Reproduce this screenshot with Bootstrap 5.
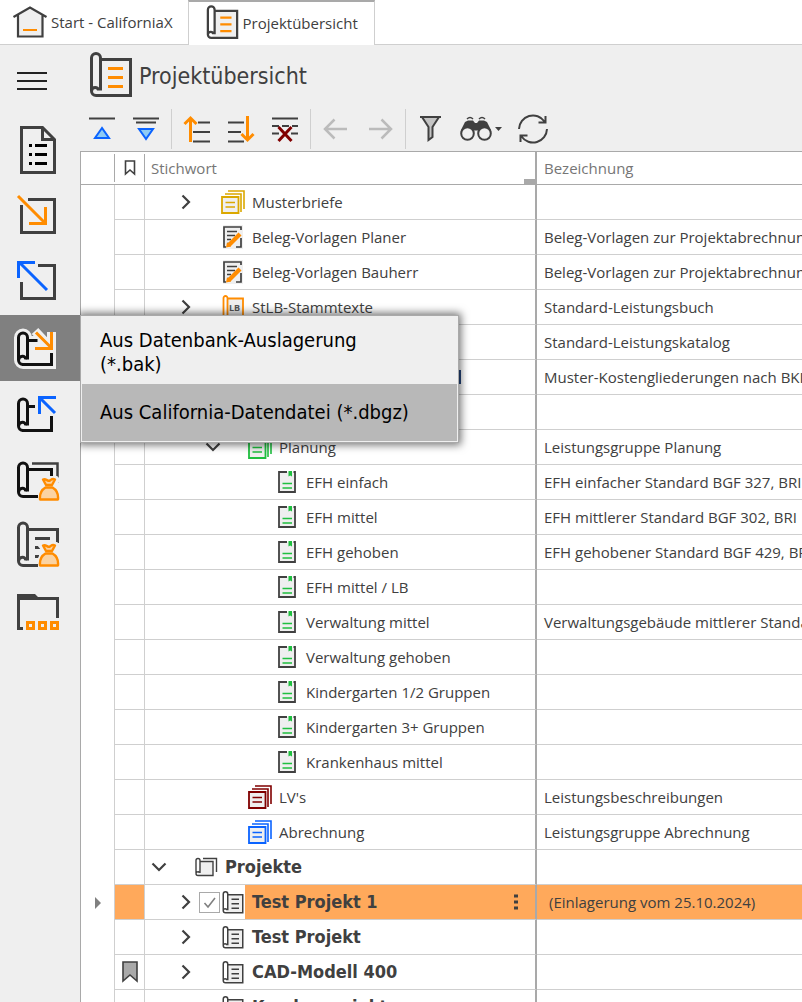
<!DOCTYPE html>
<html lang="de">
<head>
<meta charset="utf-8">
<meta name="viewport" content="width=device-width, initial-scale=1">
<title>Projektübersicht</title>
<link href="https://cdn.jsdelivr.net/npm/bootstrap@5.3.0/dist/css/bootstrap.min.css" rel="stylesheet">
<style>
:root { --ink: #404040; --line: #cfcfcf; --edge: #a9a9a9; --panel: #efefef; --orange: #ff8c00; --blue: #0a63ff; --pick: #ffa95b; --roll: #fff; --wide: "DejaVu Sans Condensed", "Noto Sans", sans-serif; }
body { font-family: "Open Sans", "Noto Sans", sans-serif; font-size: 15px; line-height: 24px; color: var(--ink); background: #fff; }
svg { display: block; flex: none; fill: none; }
button { color: inherit; font: inherit; background: none; border: 0; padding: 0; }
.tabbar { height: 45px; }
.tabbar .filler { border-bottom: 1px solid var(--line); }
.doc-tab { border: 0 solid var(--line); border-bottom-width: 1px; color: var(--ink); }
.doc-tab.start { padding: 0 15px 0 13px; }
.doc-tab.current { border-width: 0 1px; border-top: 2px solid var(--edge); padding: 0 16px 2px 17px; }
.side { width: 80px; background: var(--panel); z-index: 2; }
.side .menu-btn { display: block; height: 72px; padding-left: 17px; width: 80px; }
.side .tool { display: block; width: 80px; height: 66px; }
.side .tool.active { background: #808080; }
.flyout { left: 80px; top: 0; width: 379px; background: var(--panel); border: 1px solid var(--edge); padding: 1px; box-shadow: 0 0 8px 2px rgba(0,0,0,.55); color: #000; font-family: var(--wide); font-size: 20px; clip-path: inset(-12px -12px -12px 0); }
.flyout button { display: block; width: 100%; text-align: left; }
.flyout .entry { padding: 11px 18px 8px; }
.flyout .entry.hover { padding: 16px 18px 17px; background: #b8b8b8; }
.workspace { background: var(--panel); }
.heading { height: 62px; padding: 7px 0 0 9px; --roll: var(--panel); }
.heading h1 { font-family: var(--wide); font-size: 23px; line-height: 48px; margin: 0; padding-left: 6px; }
.toolbar { height: 44px; }
.toolbar button { width: 44px; height: 44px; display: flex; align-items: center; justify-content: center; }
.toolbar .find { width: 58px; }
.toolbar .rule { width: 1px; height: 40px; margin: 0 3px; background: var(--line); }
.grid-area { border: 1px solid var(--edge); border-width: 1px 0 0 1px; background: #fff; }
.tree { table-layout: fixed; width: 100%; border-collapse: separate; border-spacing: 0; }
.tree th, .tree td { padding: 0; overflow: hidden; white-space: nowrap; }
.tree th { height: 33px; font-weight: 400; color: #767676; border-bottom: 1px solid var(--edge); position: relative; }
.tree th .stub { height: 28px; border-right: 1px solid var(--edge); }
.tree td { height: 35px; border-bottom: 1px solid var(--line); }
.tree td:nth-child(1), .tree td:nth-child(2) { border-right: 1px solid var(--line); }
.tree td:nth-child(1) { border-bottom: 0; }
.tree th:nth-child(3), .tree td:nth-child(3) { border-right: 2px solid var(--edge); }
.tree th:nth-child(4), .tree td:nth-child(4) { padding-left: 7px; }
.tree th:nth-child(3) { padding-left: 6px; }
.sortmark { right: 0; bottom: 0; width: 11px; height: 5px; background: var(--edge); }
.node { height: 34px; }
.node .twist { width: 27px; height: 34px; display: flex; align-items: center; justify-content: center; flex: none; }
.node .slot { width: 22px; flex: none; }
.node .pic { width: 24px; flex: none; display: flex; justify-content: center; }
.node .name { padding-left: 7px; line-height: 34px; flex: 1; }
.lv1 { padding-left: 27px; } .lv2 { padding-left: 54px; } .lv3 { padding-left: 81px; }
.strong .name { font-family: var(--wide); font-weight: 700; font-size: 18px; }
.picked td:nth-child(2), .picked td:nth-child(4), .picked .name { background: var(--pick); }
.tree .picked td:nth-child(4) { padding-left: 12px; }
.slot input { appearance: none; display: block; width: 21px; height: 21px; margin: 0; border: 1px solid var(--edge); background: #fff url("data:image/svg+xml,%3Csvg xmlns='http://www.w3.org/2000/svg' viewBox='0 0 19 19'%3E%3Cpath d='M4.500 10l3.500 4 7-9' fill='none' stroke='%23808080' stroke-width='1.600'/%3E%3C/svg%3E"); }
.more { width: 38px; }
</style>
</head>
<body class="vh-100 overflow-hidden d-flex flex-column">

<svg width="0" height="0" class="position-absolute" aria-hidden="true">
  <symbol id="scroll" viewBox="0 0 44 46">
    <path d="M11.500 7.500H41.500V43.500H7L11.500 38Z" fill="#efefef"/>
    <path d="M2.500 39V6a4.500 4.500 0 0 1 9 0V38H8.500L2.500 39Z" style="fill:var(--roll)"/>
    <g stroke="#404040" stroke-width="3"><path d="M2.500 39V6a4.500 4.500 0 0 1 9 0V38.500M11.500 7.500H41.500V43.500H7A4.500 4.500 0 0 1 2.500 39C3 34 9.500 34.500 9.500 38.500"/></g>
    <path d="M19 16.500H34M19 25.500H34M19 34.500H34" stroke="currentColor" stroke-width="3"/>
  </symbol>
  <symbol id="scrollstack" viewBox="0 0 24 24">
    <path d="M6 7H19V20H4Z" fill="#efefef"/>
    <path d="M2 18V5.500a2 2 0 0 1 4 0V18M6 6.500H19V20.500H4A2 2 0 0 1 2 18.500 2 2 0 0 1 5.500 17.500M9 3.500H22.500V17" stroke="#404040" stroke-width="1.400"/>
  </symbol>
  <symbol id="stack" viewBox="0 0 24 24">
    <path d="M7 1H23V19M4 4H20V22" stroke="currentColor" stroke-width="1.600"/>
    <path d="M1 7H17.500V23H1Z" fill="#efefef" stroke="currentColor" stroke-width="1.800"/>
    <path d="M4.500 12.500H14M4.500 17H14" stroke="currentColor" stroke-width="1.600"/>
  </symbol>
  <symbol id="note" viewBox="0 0 22 24">
    <path d="M1 0H21V24H1Z" fill="#efefef"/>
    <path d="M14 22H19V13M19 5V2H2V22H4M5 6.500H15M5 10.500H13M5 14.500H9M5 18.500H7" stroke="#404040" stroke-width="1.700"/>
    <path d="M6.500 20.500L18 9" stroke="#ff8c00" stroke-width="4.200"/><path d="M4 22.500L5 17.500 9 21.500Z" fill="#ff8c00"/>
  </symbol>
  <symbol id="page" viewBox="0 0 18 22">
    <path d="M1 1H17V21H1Z" fill="#efefef"/>
    <path d="M9 1H1V21H17V1H15.500" stroke="#404040" stroke-width="1.800"/>
    <path d="M4.500 12.500H14M4.500 17H14" stroke="#1fbf3f" stroke-width="1.700"/><path d="M10.500 0H14V5.500L12.200 4.500 10.500 5.500Z" fill="#1fbf3f"/>
  </symbol>
  <symbol id="right" viewBox="0 0 10 16"><path d="M1.500 1.500L8 8 1.500 14.500" stroke="#404040" stroke-width="2.200"/></symbol>
  <symbol id="down" viewBox="0 0 16 10"><path d="M1.500 1.500L8 8 14.500 1.500" stroke="#404040" stroke-width="2.200"/></symbol>
  <symbol id="roll" viewBox="0 0 80 66"><path d="M18.500 45V22.500a4.500 4.500 0 0 1 9 0V44.500M18.500 45A4.500 4.500 0 0 0 23 49.500M18.500 45C19 40 26 40 25.500 44.500" stroke="currentColor" stroke-width="3"/></symbol>
  <symbol id="sack" viewBox="0 0 22 26">
    <path d="M7 10.500C2 13 0 18 1 24H21C22 18 20 13 15 10.500L21 4 17 0H6L1 3Z" fill="#efefef" stroke="#efefef" stroke-width="3"/>
    <path d="M7.500 11.500C4 13.500 1.500 18 2 23.500H20C20.500 18 18 13.500 14.500 11.500Z" fill="#fbd3a2" stroke="#ff8c00" stroke-width="2.400" stroke-linejoin="round"/>
    <path d="M8 9L5 3.500C8 2 10 6 12 4.500S14.500 2 17 3.500L14 9Z" fill="#fbd3a2" stroke="#ff8c00" stroke-width="2.400" stroke-linejoin="round"/>
  </symbol>
</svg>

<nav class="tabbar d-flex flex-shrink-0">
  <button class="doc-tab start d-flex align-items-center">
    <svg width="34" height="34" viewBox="0 0 34 34"><path d="M4.500 31.500V10L17 2.500 29.500 10V31.500Z" fill="#efefef"/><path d="M0.500 12L17 2.500 33.500 12M5 10V31.500H29.500V10" stroke="#404040" stroke-width="2.200"/><path d="M10 25H24" stroke="#ff8c00" stroke-width="2"/></svg>
    <span class="ps-1">Start - CaliforniaX</span>
  </button>
  <button class="doc-tab current d-flex align-items-center">
    <svg width="33" height="35" style="color:var(--orange)"><use href="#scroll"/></svg>
    <span class="ps-1">Projektübersicht</span>
  </button>
  <div class="filler flex-grow-1"></div>
</nav>

<div class="d-flex flex-grow-1" style="min-height:0">
  <aside class="side flex-shrink-0">
    <button class="menu-btn" aria-label="Menü"><svg width="30" height="18"><path d="M0 1H30M0 9H30M0 17H30" stroke="#222" stroke-width="2"/></svg></button>
    <button class="tool" aria-label="Dokument"><svg width="80" height="66"><path d="M21.500 10.500H42.500L54.500 22.500V55.500H21.500ZM42.500 10.500V22.500H54.500" stroke="#404040" stroke-width="3"/><path d="M29 28.500H32M35 28.500H47M29 37.500H32M35 37.500H47M29 46.500H32M35 46.500H47" stroke="#000" stroke-width="3"/></svg></button>
    <button class="tool" aria-label="Einlesen"><svg width="80" height="66"><path d="M28 16.500H54.500V49.500H21.500V22" stroke="#404040" stroke-width="3"/><path d="M18 13L45 40M45.500 24V40.500H29" stroke="#ff8c00" stroke-width="3"/></svg></button>
    <button class="tool" aria-label="Ausgeben"><svg width="80" height="66"><path d="M38 16.500H54.500V49.500H21.500V33" stroke="#404040" stroke-width="3"/><path d="M47 41L19 13M35 13.500H18.500V29" stroke="#0a63ff" stroke-width="3"/></svg></button>
    <div class="position-relative">
      <button class="tool active" aria-label="Einlagern" aria-expanded="true"><svg width="80" height="66">
        <path d="M18.500 45V22.500a4.500 4.500 0 0 1 9 0V25.500H37M51.500 38V49.500H23A4.500 4.500 0 0 1 18.500 45M35 16L51 33M51.500 17V33.500H35" stroke="#efefef" stroke-width="9"/>
        <path d="M18 22H50V48H20Z" fill="#efefef"/>
        <use href="#roll" width="80" height="66" style="color:#111"/><path d="M27 25.500H37.500M51.500 38V49.500H22" stroke="#111" stroke-width="3"/>
        <path d="M36 17.500L51 32.500M51.500 17V33.500H35" stroke="#ff8c00" stroke-width="3"/></svg></button>
      <div class="flyout position-absolute" role="menu">
        <button class="entry" role="menuitem">Aus Datenbank-Auslagerung<br>(*.bak)</button>
        <button class="entry hover" role="menuitem">Aus California-Datendatei (*.dbgz)</button>
      </div>
    </div>
    <button class="tool" aria-label="Auslagern"><svg width="80" height="66"><use href="#roll" width="80" height="66" style="color:#111"/><path d="M27 25.500H35M51.500 35V49.500H22" stroke="#111" stroke-width="3"/><path d="M55 32L40 17M56 16.500H39.500V33" stroke="#0a63ff" stroke-width="3"/></svg></button>
    <button class="tool" aria-label="Projektablage"><svg width="80" height="66"><path d="M32 16.500H57.500V36" stroke="#404040" stroke-width="2.500"/><path d="M18.500 45V20.500a4.500 4.500 0 0 1 9 0V44.500M18.500 45A4.500 4.500 0 0 0 23 49.500H38M18.500 45C19 40 26 40 25.500 44.500M27 22.500H51.500V30" stroke="#111" stroke-width="3"/><use href="#sack" x="38" y="29" width="22" height="26"/></svg></button>
    <button class="tool" aria-label="Vorlagenablage"><svg width="80" height="66"><path d="M18.500 48V14.500a4.500 4.500 0 0 1 9 0V47.500M18.500 48A4.500 4.500 0 0 0 23 52.500H38M18.500 48C19 43 26 43 25.500 47.500M27 16.500H57.500V30M35 25.500H50M35 34.500H41M35 43.500H39" stroke="#404040" stroke-width="3"/><use href="#sack" x="38" y="29" width="22" height="26"/></svg></button>
    <button class="tool" aria-label="Ordner"><svg width="80" height="66"><path d="M17 15H35L38 18H59V21H17Z" fill="#404040"/><path d="M18.500 19V49.500H23M57.500 20V39" stroke="#404040" stroke-width="3"/><path d="M27.500 43.500H33.500V49.500H27.500ZM39.500 43.500H45.500V49.500H39.500ZM51.500 43.500H57.500V49.500H51.500Z" stroke="#ff8c00" stroke-width="3"/></svg></button>
  </aside>

  <main class="workspace flex-grow-1 overflow-hidden d-flex flex-column">
    <header class="heading d-flex flex-shrink-0">
      <svg width="44" height="46" style="color:var(--orange)"><use href="#scroll"/></svg>
      <h1 class="fw-normal">Projektübersicht</h1>
    </header>
    <div class="toolbar d-flex align-items-center flex-shrink-0" role="toolbar">
      <button aria-label="Zum Anfang"><svg width="32" height="32"><path d="M3 5.500H29" stroke="#404040" stroke-width="2"/><path d="M16 15L9 25H23Z" fill="#8ecbf5" stroke="#0a63ff" stroke-width="2"/></svg></button>
      <button aria-label="Einklappen"><svg width="32" height="32"><path d="M3 5.500H29M6 9.500H26" stroke="#404040" stroke-width="2"/><path d="M16 26L9 16H23Z" fill="#8ecbf5" stroke="#0a63ff" stroke-width="2"/></svg></button>
      <span class="rule"></span>
      <button aria-label="Nach oben"><svg width="32" height="32"><path d="M17 9.500H29M12 19H29M12 28.500H29" stroke="#404040" stroke-width="2"/><path d="M9.500 29V5M3.500 11L9.500 5 15.500 11" stroke="#ff8c00" stroke-width="3"/></svg></button>
      <button aria-label="Nach unten"><svg width="32" height="32"><path d="M3 9.500H19M3 19H16M3 28.500H19" stroke="#404040" stroke-width="2"/><path d="M22.500 3V27M16.500 21L22.500 27 28.500 21" stroke="#ff8c00" stroke-width="3"/></svg></button>
      <button aria-label="Löschen"><svg width="32" height="32"><path d="M3 5.500H29M3 13H10M13 13H20M23 13H29M3 20.500H10M22 20.500H29" stroke="#404040" stroke-width="2"/><path d="M9.500 14L22.500 28M22.500 14L9.500 28" stroke="#800000" stroke-width="3"/></svg></button>
      <span class="rule"></span>
      <button aria-label="Zurück"><svg width="32" height="32"><path d="M27 16H5M14.500 6.500L5 16 14.500 25.500" stroke="#bbb" stroke-width="2.500"/></svg></button>
      <button aria-label="Vor"><svg width="32" height="32"><path d="M5 16H27M17.500 6.500L27 16 17.500 25.500" stroke="#bbb" stroke-width="2.500"/></svg></button>
      <span class="rule"></span>
      <button aria-label="Filter"><svg width="32" height="32"><path d="M7 4H24L17.500 14V24L13.500 27V14Z" fill="#c4c4c4" stroke="#404040" stroke-width="2"/><path d="M5 4H26" stroke="#404040" stroke-width="2"/></svg></button>
      <button class="find" aria-label="Suchen"><svg width="44" height="32" viewBox="0 0 44 32"><path d="M1 17L5 9 8 7.500H13L15 10H17L19 7.500H24L27 9 31 17 26 22 19 17.500H13L6 22Z" fill="#404040"/><g fill="#efefef" stroke="#404040" stroke-width="2"><circle cx="7.500" cy="20.500" r="6.300"/><circle cx="24.500" cy="20.500" r="6.300"/></g><path d="M7 6Q10 3 13 6M19 6Q22 3 25 6" stroke="#404040" stroke-width="1.500"/><path d="M35 14H42L38.500 18Z" fill="#404040"/></svg></button>
      <button aria-label="Aktualisieren"><svg width="32" height="32"><path d="M2 16A14 14 0 0 1 27.500 8.500M30 16A14 14 0 0 1 4.500 23.500M28.500 3V9.500H21.500M3.500 29V22.500H10.500" stroke="#404040" stroke-width="2"/></svg></button>
    </div>
    <div class="grid-area flex-grow-1 overflow-hidden">
      <table class="tree">
        <colgroup><col style="width:34px"><col style="width:30px"><col style="width:392px"><col></colgroup>
        <thead><tr>
          <th><div class="stub"></div></th>
          <th><div class="stub d-flex align-items-center justify-content-center"><svg width="12" height="16"><path d="M1.500 1H10.500V14L6 10 1.500 14Z" stroke="#404040" stroke-width="1.600"/></svg></div></th>
          <th>Stichwort<span class="sortmark position-absolute"></span></th>
          <th>Bezeichnung</th>
        </tr></thead>
        <tbody>
        <tr><td></td><td></td><td><div class="node lv1 d-flex align-items-center"><button class="twist" aria-label="Aufklappen"><svg width="10" height="16"><use href="#right"/></svg></button><span class="slot"></span><span class="pic"><svg width="24" height="24" style="color:#dba800"><use href="#stack"/></svg></span><span class="name">Musterbriefe</span></div></td><td></td></tr>
        <tr><td></td><td></td><td><div class="node lv1 d-flex align-items-center"><span class="twist"></span><span class="slot"></span><span class="pic"><svg width="22" height="24"><use href="#note"/></svg></span><span class="name">Beleg-Vorlagen Planer</span></div></td><td>Beleg-Vorlagen zur Projektabrechnung</td></tr>
        <tr><td></td><td></td><td><div class="node lv1 d-flex align-items-center"><span class="twist"></span><span class="slot"></span><span class="pic"><svg width="22" height="24"><use href="#note"/></svg></span><span class="name">Beleg-Vorlagen Bauherr</span></div></td><td>Beleg-Vorlagen zur Projektabrechnung</td></tr>
        <tr><td></td><td></td><td><div class="node lv1 d-flex align-items-center"><button class="twist" aria-label="Aufklappen"><svg width="10" height="16"><use href="#right"/></svg></button><span class="slot"></span><span class="pic"><svg width="22" height="24"><path d="M5 3H21V22H5Z" fill="#efefef"/><path d="M1.500 22V3a2 2 0 0 1 4 0V22M5.500 3.500H21V22" stroke="#ff8c00" stroke-width="1.800"/><text x="7" y="16" font-size="9" font-weight="700" fill="#555">LB</text></svg></span><span class="name">StLB-Stammtexte</span></div></td><td>Standard-Leistungsbuch</td></tr>
        <tr><td></td><td></td><td></td><td>Standard-Leistungskatalog</td></tr>
        <tr><td></td><td></td><td><div class="d-flex justify-content-end"><svg width="76" height="14"><path d="M1 0V14" stroke="#26477f" stroke-width="2"/></svg></div></td><td>Muster-Kostengliederungen nach BKI</td></tr>
        <tr><td></td><td></td><td></td><td></td></tr>
        <tr><td></td><td></td><td><div class="node lv2 d-flex align-items-center"><button class="twist" aria-label="Zuklappen"><svg width="16" height="10"><use href="#down"/></svg></button><span class="slot"></span><span class="pic"><svg width="24" height="24" style="color:#1fbf3f"><use href="#stack"/></svg></span><span class="name">Planung</span></div></td><td>Leistungsgruppe Planung</td></tr>
        <tr><td></td><td></td><td><div class="node lv3 d-flex align-items-center"><span class="twist"></span><span class="slot"></span><span class="pic"><svg width="18" height="22"><use href="#page"/></svg></span><span class="name">EFH einfach</span></div></td><td>EFH einfacher Standard BGF 327, BRI</td></tr>
        <tr><td></td><td></td><td><div class="node lv3 d-flex align-items-center"><span class="twist"></span><span class="slot"></span><span class="pic"><svg width="18" height="22"><use href="#page"/></svg></span><span class="name">EFH mittel</span></div></td><td>EFH mittlerer Standard BGF 302, BRI</td></tr>
        <tr><td></td><td></td><td><div class="node lv3 d-flex align-items-center"><span class="twist"></span><span class="slot"></span><span class="pic"><svg width="18" height="22"><use href="#page"/></svg></span><span class="name">EFH gehoben</span></div></td><td>EFH gehobener Standard BGF 429, BRI</td></tr>
        <tr><td></td><td></td><td><div class="node lv3 d-flex align-items-center"><span class="twist"></span><span class="slot"></span><span class="pic"><svg width="18" height="22"><use href="#page"/></svg></span><span class="name">EFH mittel / LB</span></div></td><td></td></tr>
        <tr><td></td><td></td><td><div class="node lv3 d-flex align-items-center"><span class="twist"></span><span class="slot"></span><span class="pic"><svg width="18" height="22"><use href="#page"/></svg></span><span class="name">Verwaltung mittel</span></div></td><td>Verwaltungsgebäude mittlerer Standard</td></tr>
        <tr><td></td><td></td><td><div class="node lv3 d-flex align-items-center"><span class="twist"></span><span class="slot"></span><span class="pic"><svg width="18" height="22"><use href="#page"/></svg></span><span class="name">Verwaltung gehoben</span></div></td><td></td></tr>
        <tr><td></td><td></td><td><div class="node lv3 d-flex align-items-center"><span class="twist"></span><span class="slot"></span><span class="pic"><svg width="18" height="22"><use href="#page"/></svg></span><span class="name">Kindergarten 1/2 Gruppen</span></div></td><td></td></tr>
        <tr><td></td><td></td><td><div class="node lv3 d-flex align-items-center"><span class="twist"></span><span class="slot"></span><span class="pic"><svg width="18" height="22"><use href="#page"/></svg></span><span class="name">Kindergarten 3+ Gruppen</span></div></td><td></td></tr>
        <tr><td></td><td></td><td><div class="node lv3 d-flex align-items-center"><span class="twist"></span><span class="slot"></span><span class="pic"><svg width="18" height="22"><use href="#page"/></svg></span><span class="name">Krankenhaus mittel</span></div></td><td></td></tr>
        <tr><td></td><td></td><td><div class="node lv2 d-flex align-items-center"><span class="twist"></span><span class="slot"></span><span class="pic"><svg width="24" height="24" style="color:#800000"><use href="#stack"/></svg></span><span class="name">LV's</span></div></td><td>Leistungsbeschreibungen</td></tr>
        <tr><td></td><td></td><td><div class="node lv2 d-flex align-items-center"><span class="twist"></span><span class="slot"></span><span class="pic"><svg width="24" height="24" style="color:var(--blue)"><use href="#stack"/></svg></span><span class="name">Abrechnung</span></div></td><td>Leistungsgruppe Abrechnung</td></tr>
        <tr class="strong"><td></td><td></td><td><div class="node d-flex align-items-center"><button class="twist" aria-label="Zuklappen"><svg width="16" height="10"><use href="#down"/></svg></button><span class="slot"></span><span class="pic"><svg width="24" height="24"><use href="#scrollstack"/></svg></span><span class="name">Projekte</span></div></td><td></td></tr>
        <tr class="strong picked"><td><svg class="mx-auto" width="6" height="12"><path d="M0 0L6 6 0 12Z" fill="#808080"/></svg></td><td></td><td><div class="node lv1 d-flex align-items-center"><button class="twist" aria-label="Aufklappen"><svg width="10" height="16"><use href="#right"/></svg></button><span class="slot"><input type="checkbox" checked aria-label="Test Projekt 1"></span><span class="pic"><svg width="22" height="23"><use href="#scroll"/></svg></span><span class="name d-flex align-items-center justify-content-between">Test Projekt 1<button class="more" aria-label="Mehr"><svg class="mx-auto" width="4" height="16"><path d="M0 2H4M0 8H4M0 14H4" stroke="#404040" stroke-width="3"/></svg></button></span></div></td><td>(Einlagerung vom 25.10.2024)</td></tr>
        <tr class="strong"><td></td><td></td><td><div class="node lv1 d-flex align-items-center"><button class="twist" aria-label="Aufklappen"><svg width="10" height="16"><use href="#right"/></svg></button><span class="slot"></span><span class="pic"><svg width="22" height="23"><use href="#scroll"/></svg></span><span class="name">Test Projekt</span></div></td><td></td></tr>
        <tr class="strong"><td></td><td><svg class="mx-auto" width="16" height="22"><path d="M1 1H15V20L8 14 1 20Z" fill="#a9a9a9" stroke="#404040" stroke-width="1.600"/></svg></td><td><div class="node lv1 d-flex align-items-center"><button class="twist" aria-label="Aufklappen"><svg width="10" height="16"><use href="#right"/></svg></button><span class="slot"></span><span class="pic"><svg width="22" height="23"><use href="#scroll"/></svg></span><span class="name">CAD-Modell 400</span></div></td><td></td></tr>
        <tr class="strong"><td></td><td></td><td><div class="node lv1 d-flex align-items-center"><span class="twist"></span><span class="slot"></span><span class="pic"><svg width="22" height="23"><use href="#scroll"/></svg></span><span class="name">Kundenprojekt</span></div></td><td></td></tr>
        </tbody>
      </table>
    </div>
  </main>
</div>
<script src="https://cdn.jsdelivr.net/npm/bootstrap@5.3.0/dist/js/bootstrap.bundle.min.js"></script>
</body>
</html>
